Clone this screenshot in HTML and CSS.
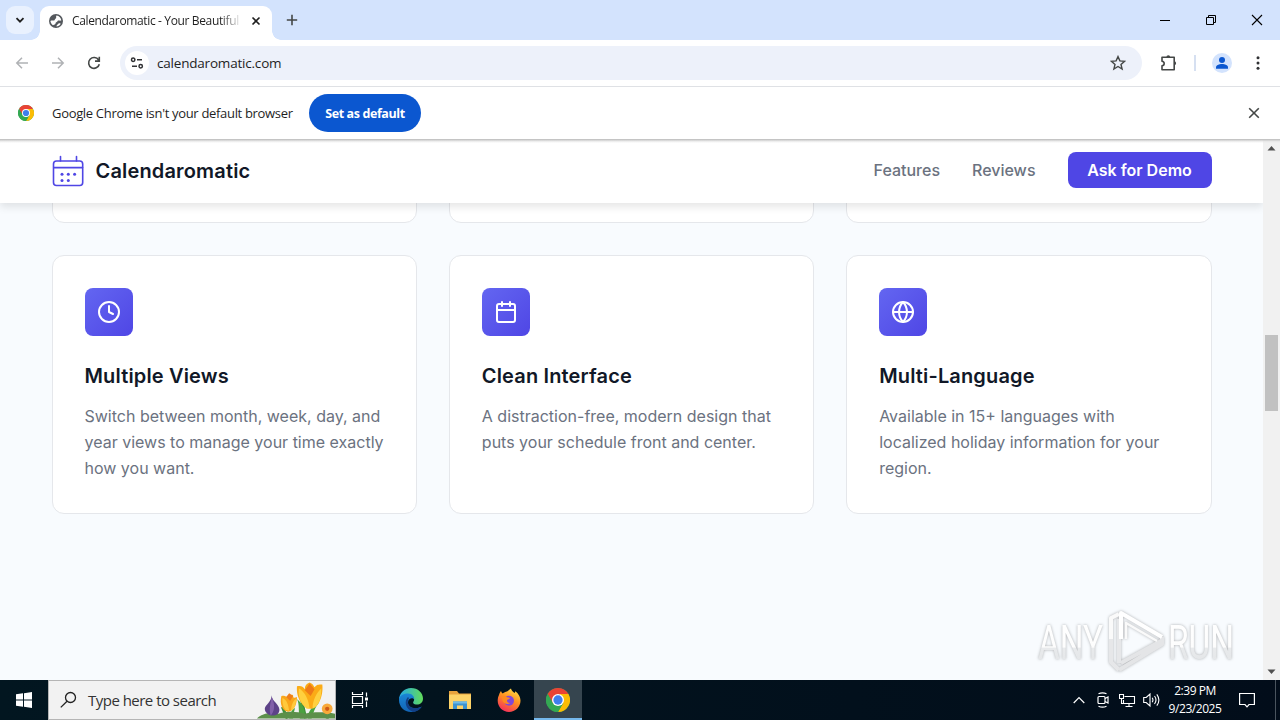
FILE: index.html
```html
<!DOCTYPE html>
<html lang="en">
<head>
  <meta charset="UTF-8">
  <meta name="viewport" content="width=device-width, initial-scale=1.0">
  <title>Calendaromatic - Your Beautiful Calendar</title>
  <link rel="stylesheet" href="styles.css">
</head>
<body>
  <div class="screen">
    <div class="tabstrip">
      <div class="tab-search">
        <svg width="10" height="10" viewBox="0 0 10 10"><path d="M1.500 3.200 5 6.700l3.500-3.500" fill="none" stroke="#1f1f1f" stroke-width="1.800"/></svg>
      </div>
      <div class="tab">
        <svg width="16" height="16" viewBox="0 0 16 16"><circle cx="8" cy="8" r="7" fill="#54585d"/><path d="M8.500 2.500c-1 1.500.5 2-1 3.200C6.500 6.500 7 7 6 7.500c-1 .4-2-.4-3.600.5.300 2 1.300 3.300 2.600 4.300 1.300-1 2.500-.6 2.600-2C7.700 9 9 9.200 9.500 8.200c.6-1.200 2-.2 3.800-.7-.2-2.500-2-4.600-4.800-5zM8.500 13.500c1.500 0 3.300-1 4.200-2.800-1.300-.6-2.200-.5-2.700.3-.5 1-1.500 1-1.500 2.500z" fill="#fff"/></svg>
        <span class="tab-title">Calendaromatic - Your Beautiful</span>
        <svg class="tab-close" width="16" height="16" viewBox="0 0 16 16"><path d="m4.500 4.500 7 7m0-7-7 7" stroke="#1f1f1f" stroke-width="1.600"/></svg>
      </div>
      <svg class="new-tab" width="12" height="12" viewBox="0 0 12 12"><path d="M6 .8v10.400M.8 6h10.400" stroke="#444746" stroke-width="1.600"/></svg>
      <div class="win-buttons">
        <svg width="46" height="40" viewBox="0 0 46 40"><path d="M18 20.500h10" stroke="#000"/></svg>
        <svg width="46" height="40" viewBox="0 0 46 40"><path d="M18.500 17.500h7v7h-7zM20.500 17.500v-2h7v7h-2" fill="none" stroke="#000"/></svg>
        <svg width="46" height="40" viewBox="0 0 46 40"><path d="m18 15 10 10m0-10L18 25" stroke="#000" stroke-width="1.100"/></svg>
      </div>
    </div>

    <div class="toolbar">
      <div class="nav-buttons">
        <svg width="14" height="14" viewBox="0 0 14 14"><path d="M13 7H2M7 1.800 1.800 7 7 12.200" fill="none" stroke="#b0b2b5" stroke-width="1.500"/></svg>
        <svg width="14" height="14" viewBox="0 0 14 14"><path d="M1 7h11M7 1.800 12.200 7 7 12.200" fill="none" stroke="#b0b2b5" stroke-width="1.500"/></svg>
        <svg width="14" height="14" viewBox="0 0 14 14"><path d="M11.600 4A5.400 5.400 0 1 0 12.300 8.200M12.300.8v4.300H8" fill="none" stroke="#444746" stroke-width="1.600"/></svg>
      </div>
      <div class="omnibox">
        <div class="site-info">
          <svg width="14" height="14" viewBox="0 0 14 14" fill="none" stroke="#303134" stroke-width="1.500"><circle cx="3.200" cy="3.800" r="1.700"/><path d="M7 3.800h5M2 10.200h5"/><circle cx="10.700" cy="10.200" r="1.700"/></svg>
        </div>
        <span class="url">calendaromatic.com</span>
        <svg class="star" width="16" height="16" viewBox="0 0 16 16"><path d="m8 1.600 1.900 4.300 4.700.4L11 9.400l1.100 4.600L8 11.500 3.900 14 5 9.400 1.400 6.300l4.700-.4z" fill="none" stroke="#444746" stroke-width="1.400"/></svg>
      </div>
      <svg class="puzzle" width="18" height="18" viewBox="0 0 18 18"><path d="M2 3.200h12.200v12.500H2v-3.900c2.900-.3 2.900-4.300 0-4.600z" fill="none" stroke="#444746" stroke-width="1.600" stroke-linejoin="round"/><path d="M6.400 3.200a1.900 1.900 0 0 1 3.800 0zM14.200 7.300a1.900 1.900 0 0 1 0 3.800z" fill="#444746"/></svg>
      <span class="divider"></span>
      <div class="avatar">
        <svg width="20" height="20" viewBox="0 0 20 20" fill="#0b57d0"><circle cx="10" cy="7" r="3"/><path d="M4 15.800v-1.500c0-2 3-3.300 6-3.300s6 1.300 6 3.300v1.500z"/></svg>
      </div>
      <svg class="menu-dots" width="4" height="16" viewBox="0 0 4 16" fill="#303134"><circle cx="2" cy="2.800" r="1.500"/><circle cx="2" cy="8" r="1.500"/><circle cx="2" cy="13.200" r="1.500"/></svg>
    </div>

    <div class="infobar">
      <svg class="infobar-logo" width="16" height="16" viewBox="0 0 48 48"><use href="#chrome"/></svg>
      <span class="infobar-text">Google Chrome isn't your default browser</span>
      <button class="default-btn">Set as default</button>
      <svg class="infobar-close" width="12" height="12" viewBox="0 0 12 12"><path d="m1.200 1.200 9.600 9.600m0-9.600-9.600 9.600" stroke="#444746" stroke-width="1.600"/></svg>
    </div>

    <div class="viewport">
      <div class="page">
        <header class="header">
          <div class="container header-inner">
            <div class="logo">
              <svg width="32" height="32" viewBox="0 0 32 32" fill="none" stroke="#4f46e5" stroke-width="1.600" stroke-linecap="round"><rect x="1.500" y="6" width="29.200" height="24.500" rx="3"/><path d="M2 12.600h28.500M8.500 1.500v4.500M24.500 1.500v4.500"/><g fill="#4f46e5" stroke="none"><circle cx="10" cy="19.300" r="1.500"/><circle cx="16.300" cy="19.300" r="1.500"/><circle cx="22.600" cy="19.300" r="1.500"/><circle cx="10" cy="25.500" r="1.500"/><circle cx="16.300" cy="25.500" r="1.500"/></g></svg>
              <span>Calendaromatic</span>
            </div>
            <nav class="nav">
              <a>Features</a>
              <a>Reviews</a>
              <a class="btn">Ask for Demo</a>
            </nav>
          </div>
        </header>

        <section class="features">
          <div class="container grid">
            <div class="card card-prev"></div>
            <div class="card card-prev"></div>
            <div class="card card-prev"></div>
            <div class="card">
              <div class="card-icon">
                <svg width="24" height="24" viewBox="0 0 24 24"><circle cx="12" cy="12" r="10"/><path d="M12 6v6l4 2"/></svg>
              </div>
              <h3>Multiple Views</h3>
              <p>Switch between month, week, day, and year views to manage your time exactly how you want.</p>
            </div>
            <div class="card">
              <div class="card-icon">
                <svg width="24" height="24" viewBox="0 0 24 24"><rect x="3" y="4" width="18" height="18" rx="2"/><path d="M16 2v4M8 2v4M3 10h18"/></svg>
              </div>
              <h3>Clean Interface</h3>
              <p>A distraction-free, modern design that puts your schedule front and center.</p>
            </div>
            <div class="card">
              <div class="card-icon">
                <svg width="24" height="24" viewBox="0 0 24 24"><circle cx="12" cy="12" r="10"/><path d="M2 12h20M12 2a15.300 15.300 0 0 1 4 10 15.300 15.300 0 0 1-4 10 15.300 15.300 0 0 1-4-10 15.300 15.300 0 0 1 4-10z"/></svg>
              </div>
              <h3>Multi-Language</h3>
              <p>Available in 15+ languages with localized holiday information for your region.</p>
            </div>
          </div>
        </section>
      </div>
      <div class="scrollbar">
        <svg width="17" height="17" viewBox="0 0 17 17"><path d="M4.500 10.500h8l-4-4.500z" fill="#505050"/></svg>
        <div class="thumb"></div>
        <svg width="17" height="17" viewBox="0 0 17 17"><path d="M4.500 6.500h8l-4 4.500z" fill="#505050"/></svg>
      </div>

      <svg class="watermark" width="220" height="72" viewBox="0 0 220 72">
        <defs>
          <linearGradient id="fade" x1="0" y1="0" x2="0" y2="1">
            <stop offset="0" stop-color="#fff"/>
            <stop offset=".58" stop-color="#fdfdfd"/>
            <stop offset=".6" stop-color="#e8eaec"/>
            <stop offset="1" stop-color="#e2e4e6"/>
          </linearGradient>
        </defs>
        <g fill="url(#fade)">
          <text x="6" y="55" textLength="65" lengthAdjust="spacingAndGlyphs">ANY</text>
          <text x="136" y="55" textLength="66" lengthAdjust="spacingAndGlyphs">RUN</text>
        </g>
        <g transform="translate(3 1)" fill="none" stroke-width="4" stroke-linejoin="round">
          <path d="M84 14v44M76 34v23l8 8" stroke="#e6e7e9"/>
          <path d="M86 58l40-22M84 65l43-26V32" stroke="#e4e5e7"/>
          <path d="M76 34V13l8-4" stroke="#fafafa"/>
          <path d="M86 34V8l41 24" stroke="#fff"/>
          <path d="M91 34V18l31 18" stroke="#fafafa" stroke-width="2.500"/>
        </g>
      </svg>
    </div>

    <div class="taskbar">
      <div class="start">
        <svg width="16" height="16" viewBox="0 0 16 16" fill="#fff"><path d="M0 2.200 7 1.300v6.200H0zM8 1.200 16 0v7.500H8zM0 8.500h7v6.200l-7-.9zM8 8.500h8V16l-8-1.200z"/></svg>
      </div>
      <div class="search">
        <svg class="search-icon" width="18" height="18" viewBox="0 0 18 18" fill="none" stroke="#222" stroke-width="1.300"><circle cx="10.500" cy="6.500" r="5"/><path d="m7 10.200-6.200 6.200"/></svg>
        <span>Type here to search</span>
        <svg class="flowers" width="78" height="38" viewBox="0 0 80 38">
          <path d="M50 38 46 20M31 38l-5-12M72 38l1-10" stroke="#3f8f3a" stroke-width="3"/>
          <path d="M44 38c-2-7 0-14-3-20 6 5 9 12 8 20zM52 38c0-8 6-14 12-17-5 6-6 11-8 17zM33 38c0-4 2-8 6-11-1 5-2 7-2 11z" fill="#4aa23f"/>
          <path d="M0 38c4-5 14-7 22-5 10-3 19-2 27 0 9-2 21-2 31 0v5z" fill="#5c8f4a"/>
          <path d="M15 14c0 6 8 9 8 15 0 4-3 6-7 6s-8-3-8-7 7-7 7-14z" fill="#5d4288"/>
          <path d="M15 16c-1 7-3 11-1 19 4-4 5-11 1-19z" fill="#8160a8"/>
          <path d="M25 15c3-1 5 0 7 2 1-3 3-4 5-3 0 3 1 3 4 2 0 6-2 14-9 15-6 0-9-8-7-16z" fill="#f9a61a"/>
          <path d="M29 29c-3-4-3-8-3-12 5 2 6 7 7 13zM35 30c0-6 2-10 5-12 0 5-1 10-5 12z" fill="#ffc93c"/>
          <path d="m30 16 3-4 4 3-3 5z" fill="#ef7d1a"/>
          <path d="M41 5c4-1 6 0 8 3 0-4 2-6 5-7 3 1 4 3 5 5 2-3 4-3 8-3 1 9-2 23-12 25-9-1-15-12-14-23z" fill="#fbab17"/>
          <path d="M51 28c-7-6-9-13-8-21 6 4 10 11 11 21zM57 28c0-9 4-16 9-21 0 10-2 18-9 21z" fill="#ffd03f"/>
          <path d="m49 9 5-7 5 6-4 7z" fill="#ee7a18"/>
          <circle cx="72" cy="28" r="5.500" fill="#f8a93a"/><circle cx="72" cy="28" r="2.200" fill="#cf5a16"/>
        </svg>
      </div>
      <div class="task task-view">
        <svg width="18" height="18" viewBox="0 0 18 18" fill="none" stroke="#fff" stroke-width="1.200"><path d="M1.500 5.500h10v7h-10zM1.500 1v2.500h10V1M1.500 17v-2.500h10V17M15.500 1.500v4M15.500 10.500V16"/><path d="M14 6.500h3v3h-3z" fill="#fff" stroke="none"/></svg>
      </div>
      <div class="task">
        <svg width="26" height="26" viewBox="0 0 26 26">
          <defs>
            <linearGradient id="edge1" x1="0" x2="1"><stop offset="0" stop-color="#23a8e8"/><stop offset="1" stop-color="#62dc5a"/></linearGradient>
            <linearGradient id="edge2" x1="0" x2="0" y1="0" y2="1"><stop offset="0" stop-color="#1a86d6"/><stop offset="1" stop-color="#1264b4"/></linearGradient>
          </defs>
          <path d="M1 13C1 6 6.500 1 13 1c7 0 12 5 12 10.500 0 4-3 6-6 6-3.500 0-4.500-1.500-3.500-3 2-3-1-6-4.500-6-4 0-9 1-10 4.500z" fill="url(#edge1)"/>
          <path d="M1 13c0-4 4-6.500 9-6.500 4 0 6.500 3 6.200 6-1.200-2-5-1.700-6 1.500-1.300 5 4 8.500 9.800 7 2-.6 2.700-.8 3.700-1.500C21.500 23 17 25 13 25 6 25 1 19.500 1 13z" fill="url(#edge2)"/>
          <path d="M10 10c-4 4-3 12 5 14.900C18 25 22 23 23.700 19.500c-6 3.500-14 1-13.900-4.500.1-2 .6-3 1.200-3.700z" fill="#123f86"/>
        </svg>
      </div>
      <div class="task">
        <svg width="22" height="20" viewBox="0 0 22 20"><path d="M0 1h8l2 2.500h12V9H0z" fill="#e8a33d"/><path d="M0 4.500h22V19H0z" fill="#fdd368"/><path d="M4 11.500h14V19h-4v-3.500H8V19H4z" fill="#3d93d0"/><path d="M4 11.500h14v2H4z" fill="#6fbbe8"/></svg>
      </div>
      <div class="task">
        <svg width="24" height="24" viewBox="0 0 24 24">
          <defs><linearGradient id="fox" x1=".8" y1="0" x2=".3" y2="1"><stop offset="0" stop-color="#ffe14a"/><stop offset=".45" stop-color="#ff9320"/><stop offset="1" stop-color="#f52d5c"/></linearGradient></defs>
          <path d="M2 7c.4-2 1.300-3 2-4 .3 1.300 1 2 1.800 2.500C7 4.500 8.500 3.500 10 3.500c1.700-.2 1.500-1.800 4-3 .2 2 2 3 3.500 4.500C18 4.500 18.200 4 18 3.300c3.500 2 5.500 6 5.500 9.500C23.500 19 18.300 24 12 24S.7 19 .7 12.800C.7 10.500 1.200 8.500 2 7z" fill="url(#fox)"/>
          <circle cx="12" cy="12.700" r="5" fill="#8048d8"/>
          <path d="M4 9c2-1.700 4.500-1.200 6 .2 1 .2 2 .3 3 .6-.3 1.500-2 1.700-3 2.200-.2 2 1 3 3 3-2 2-6.500 1-7.500-2.500C5.300 11 5 10 4 9z" fill="#ff8a1f"/>
        </svg>
      </div>
      <div class="task active">
        <svg width="24" height="24" viewBox="0 0 48 48">
          <g id="chrome">
            <circle cx="24" cy="24" r="24" fill="#34a853"/>
            <path d="M24 24 3.200 12A24 24 0 0 1 44.800 12z" fill="#ea4335"/>
            <path d="M24 12h20.800A24 24 0 0 1 24 48l10.400-18z" fill="#fbbc05"/>
            <path d="M3.200 12 13.600 30 24 24l4-12z" fill="#ea4335"/>
            <path d="M3.200 12 13.600 30l8 6 12.800-6L24 48A24 24 0 0 1 3.200 12z" fill="#34a853"/>
            <circle cx="24" cy="24" r="12" fill="#fff"/>
            <circle cx="24" cy="24" r="9.300" fill="#3f7fee"/>
          </g>
        </svg>
      </div>
      <div class="tray">
        <svg width="12" height="8" viewBox="0 0 12 8"><path d="M.7 7 6 1.500 11.300 7" fill="none" stroke="#fff" stroke-width="1.200"/></svg>
        <svg width="12" height="16" viewBox="0 0 12 16" fill="none" stroke="#fff" stroke-width="1.200"><rect x="1" y="4.500" width="7" height="7" rx="1"/><path d="M8 6.500 11 5v6L8 9.500M1.500 1.800q4-2 8 0M1.500 14.200q4 2 8 0"/></svg>
        <svg width="17" height="15" viewBox="0 0 17 15" fill="none" stroke="#fff" stroke-width="1.100"><path d="M5.500 3.500h10v7h-11V7M10 10.500v3M6.500 13.500h7M.5 1.500h4v4h-4zM2.500 5.500v5h2"/></svg>
        <svg width="17" height="16" viewBox="0 0 17 16" fill="none" stroke="#fff" stroke-width="1.100"><path d="M.7 5.500h2.500L7 2v12L3.200 10.500H.7zM9.200 5.800q1.500 2.200 0 4.400M11.500 4q3 4 0 8M13.800 2.300q4.200 5.700 0 11.400"/></svg>
      </div>
      <div class="clock">
        <span>2:39 PM</span>
        <span>9/23/2025</span>
      </div>
      <svg class="notify" width="16" height="16" viewBox="0 0 16 16"><path d="M.6 1.500h14.800v11H10L8 14.800l-2-2.300H.6z" fill="none" stroke="#fff" stroke-width="1.200"/></svg>
      <div class="show-desktop"></div>
    </div>
  </div>
</body>
</html>
```
FILE: styles.css
```css
*{
  margin: 0;
  padding: 0;
  box-sizing: border-box;
}
svg{
  display: block;
  flex: none;
}
body{
  font-family: "Open Sans", "Noto Sans", sans-serif;
  overflow: hidden;
}
.screen{
  width: 1280px;
  height: 720px;
  display: flex;
  flex-direction: column;
  overflow: hidden;
}

/* tab strip */
.tabstrip{
  height: 40px;
  flex: none;
  display: flex;
  align-items: center;
  background-color: #d3e3fd;
}
.tab-search{
  width: 28px;
  height: 28px;
  margin: 0 6px;
  border-radius: 9px;
  background-color: #e9f1fe;
  display: flex;
  align-items: center;
  justify-content: center;
}
.tab{
  position: relative;
  width: 232px;
  height: 34px;
  margin-top: 6px;
  padding: 0 8px 5px;
  border-radius: 9px 9px 0 0;
  background-color: #fff;
  display: flex;
  align-items: center;
}
.tab::before,
.tab::after{
  content: "";
  position: absolute;
  bottom: 0;
  width: 9px;
  height: 9px;
}
.tab::before{
  left: -9px;
  background: radial-gradient(circle at 0 0, transparent 8.5px, #fff 9px);
}
.tab::after{
  right: -9px;
  background: radial-gradient(circle at 100% 0, transparent 8.5px, #fff 9px);
}
.tab-title{
  width: 167px;
  margin-left: 8px;
  white-space: nowrap;
  font-size: 12px;
  letter-spacing: -0.36px;
  color: #1f1f1f;
  -webkit-mask-image: linear-gradient(to right, #000 148px, transparent 170px);
  mask-image: linear-gradient(to right, #000 148px, transparent 170px);
}
.tab-close{
  margin-left: 9px;
}
.new-tab{
  margin-left: 14px;
}
.win-buttons{
  margin-left: auto;
  display: flex;
}

/* toolbar */
.toolbar{
  height: 47px;
  flex: none;
  padding-right: 20px;
  border-bottom: 1px solid #dfe1e5;
  background-color: #fff;
  display: flex;
  align-items: center;
}
.nav-buttons{
  display: flex;
  gap: 22px;
  padding-left: 15px;
}
.omnibox{
  width: 1022px;
  height: 34px;
  margin-left: 19px;
  padding: 0 16px 0 5px;
  border-radius: 17px;
  background-color: #edf1fa;
  display: flex;
  align-items: center;
}
.site-info{
  width: 24px;
  height: 24px;
  border-radius: 50%;
  background-color: #fff;
  display: flex;
  align-items: center;
  justify-content: center;
}
.url{
  margin-left: 8px;
  font-size: 13.5px;
  letter-spacing: -0.2px;
  color: #1f1f1f;
}
.star{
  margin-left: auto;
}
.puzzle{
  margin-left: 18px;
}
.divider{
  width: 2px;
  height: 16px;
  margin-left: 16px;
  background-color: #d6e0f1;
}
.avatar{
  width: 20px;
  height: 20px;
  margin-left: 16px;
  border-radius: 50%;
  background-color: #d3e3fd;
}
.menu-dots{
  margin-left: auto;
}

/* default browser bar */
.infobar{
  height: 52px;
  flex: none;
  padding: 0 20px 0 18px;
  background-color: #fff;
  display: flex;
  align-items: center;
}
.infobar-text{
  width: 257px;
  margin-left: 18px;
  white-space: nowrap;
  font-size: 13px;
  letter-spacing: -0.32px;
  color: #1f1f1f;
}
.default-btn{
  width: 112px;
  height: 38px;
  border: none;
  border-radius: 19px;
  background-color: #0b57d0;
  color: #fff;
  font-family: inherit;
  font-size: 12.5px;
  font-weight: 700;
  letter-spacing: -0.4px;
}
.infobar-close{
  margin-left: auto;
}

/* web page */
.viewport{
  position: relative;
  height: 541px;
  flex: none;
  padding-top: 1px;
  display: flex;
  font-family: Inter, sans-serif;
}
.viewport::before{
  content: "";
  position: absolute;
  z-index: 3;
  top: 0;
  left: 0;
  width: 100%;
  height: 4px;
  background: linear-gradient(#b9b9b9, rgba(225, 225, 225, 0.6) 60%, transparent);
}
.page{
  width: 1263px;
  height: 540px;
  overflow: hidden;
  background-color: #f8fbfe;
  line-height: 1.6;
}
.container{
  max-width: 1200px;
  margin: 0 auto;
  padding: 0 20px;
}
.header{
  position: relative;
  z-index: 2;
  height: 63px;
  background-color: #fff;
  box-shadow: 0 4px 8px rgba(0, 0, 0, 0.1);
}
.header-inner{
  height: 61px;
  display: flex;
  align-items: center;
  justify-content: space-between;
}
.logo{
  display: flex;
  align-items: center;
  gap: 12px;
  font-size: 20px;
  font-weight: 600;
  letter-spacing: 0.16px;
  color: #111827;
}
.nav{
  display: flex;
  align-items: center;
  gap: 32px;
  font-size: 16px;
  font-weight: 500;
  color: #6b7280;
}
.nav .btn{
  width: 144px;
  height: 36px;
  margin-bottom: 1px;
  border-radius: 8px;
  background-color: #4f46e5;
  line-height: 36px;
  text-align: center;
  font-weight: 600;
  color: #fff;
}
.grid{
  display: grid;
  grid-template-columns: repeat(3, 1fr);
  gap: 32px;
}
.card{
  padding: 32px;
  border: 1px solid #e5e7eb;
  border-radius: 12px;
  background-color: #fff;
}
.card-prev{
  height: 40px;
  margin-top: -19.7px;
  padding: 0;
}
.card-icon{
  width: 48px;
  height: 48px;
  margin-bottom: 24px;
  border-radius: 8px;
  background: linear-gradient(135deg, #6366f1, #4f46e5);
  display: flex;
  align-items: center;
  justify-content: center;
}
.card-icon svg{
  fill: none;
  stroke: #fff;
  stroke-width: 2;
  stroke-linecap: round;
  stroke-linejoin: round;
}
.card h3{
  margin-bottom: 12px;
  font-size: 20px;
  font-weight: 600;
  letter-spacing: 0.15px;
  color: #111827;
}
.card p{
  font-size: 16px;
  color: #6b7280;
}
.scrollbar{
  width: 17px;
  height: 540px;
  background-color: #f1f1f1;
  display: flex;
  flex-direction: column;
  align-items: center;
  justify-content: space-between;
}
.thumb{
  width: 13px;
  height: 76px;
  margin-top: -74px;
  background-color: #c1c1c1;
}
.watermark{
  position: absolute;
  z-index: 4;
  right: 28px;
  bottom: 4px;
  filter: drop-shadow(0 0 1.5px rgba(0, 0, 0, 0.3));
}
.watermark text{
  font-family: Roboto, sans-serif;
  font-size: 49px;
}

/* taskbar */
.taskbar{
  height: 40px;
  flex: none;
  display: flex;
  align-items: center;
  background: linear-gradient(to right, #021620, #020d1a);
  color: #fff;
}
.start{
  width: 48px;
  display: flex;
  justify-content: center;
}
.search{
  position: relative;
  width: 288px;
  height: 40px;
  padding-left: 11px;
  border: 1px solid #b5b5b5;
  background-color: #f2f2f2;
  display: flex;
  align-items: center;
  font-size: 15px;
  letter-spacing: -0.52px;
  color: #333;
}
.search span{
  margin-left: 10px;
}
.flowers{
  position: absolute;
  right: 0;
  bottom: 0;
}
.task{
  width: 49px;
  height: 40px;
  display: flex;
  align-items: center;
  justify-content: center;
}
.task-view{
  width: 50px;
  padding-right: 2px;
}
.active{
  width: 48px;
  margin-left: 1px;
  border-bottom: 2px solid #76b9ed;
  background-color: #36454f;
}
.active svg{
  margin-top: 2px;
}
.tray{
  margin-left: auto;
  display: flex;
  align-items: center;
  gap: 10px;
}
.tray svg:nth-child(1){
  margin-right: 2px;
}
.tray svg:nth-child(4){
  margin-left: -3px;
}
.clock{
  width: 70px;
  display: flex;
  flex-direction: column;
  align-items: center;
  line-height: 18px;
  font-size: 12px;
  letter-spacing: -0.45px;
}
.notify{
  margin-left: 9px;
}
.show-desktop{
  width: 5px;
  height: 40px;
  margin-left: 20px;
  border-left: 1px solid #4a545e;
}
```
